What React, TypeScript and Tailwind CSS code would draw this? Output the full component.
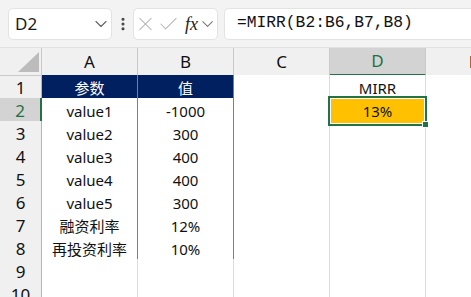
import React from "react";
import { X, Check, ChevronDown, EllipsisVertical } from "lucide-react";

const columns = ["A", "B", "C", "D", "E"];

const tableData: [string, string][] = [
  ["参数", "值"],
  ["value1", "-1000"],
  ["value2", "300"],
  ["value3", "400"],
  ["value4", "400"],
  ["value5", "300"],
  ["融资利率", "12%"],
  ["再投资利率", "10%"],
];

const Toolbar: React.FC = () => (
  <div className="h-[47px] bg-[#f3f3f3] flex items-center pl-2">
    {/* Name box */}
    <div className="w-[104px] h-[32px] bg-white rounded-[5px] border border-[#e3e3e3] flex items-center justify-between pl-[6px] pr-0">
      <span className="text-[17px] text-[#1a1a1a]">D2</span>
      <ChevronDown size={20} strokeWidth={1.4} className="text-[#666]" />
    </div>
    <div className="w-[21px] flex justify-center">
      <EllipsisVertical size={16} strokeWidth={2.6} className="text-[#444]" />
    </div>
    {/* Cancel / enter / fx */}
    <div className="w-[85px] h-[32px] bg-white rounded-[5px] border border-[#e3e3e3] flex items-center pl-0">
      <X size={24} strokeWidth={1.1} className="text-[#b8b8b8]" />
      <Check size={24} strokeWidth={1.1} className="text-[#b8b8b8]" />
      <span className="ml-[5px] text-[18px] italic text-[#222] font-['Liberation_Serif',serif] leading-none">
        fx
      </span>
      <ChevronDown size={20} strokeWidth={1.3} className="text-[#777]" />
    </div>
    {/* Formula bar */}
    <div className="ml-[6px] flex-1 h-[32px] bg-white rounded-l-[5px] border border-r-0 border-[#e3e3e3] flex items-center pl-[12px]">
      <span className="font-['Liberation_Mono',monospace] text-[16.3px] text-[#111]">
        =MIRR(B2:B6,B7,B8)
      </span>
    </div>
  </div>
);

const ColumnHeader: React.FC = () => (
  <div className="grid grid-cols-[42px_96px_96px_96px_96px_96px] h-[28px] border-t border-[#e2e2e2]">
    <div className="bg-[#f0f0f0] border-r border-b border-[#c9c9c9] relative">
      <svg className="absolute right-[2px] bottom-[3px]" width="21" height="20" viewBox="0 0 21 20">
        <polygon points="21,0 21,20 0,20" fill="#bcbcbc" />
      </svg>
    </div>
    {columns.map((c) =>
      c === "D" ? (
        <div
          key={c}
          className="bg-[#d3d3d3] border-r border-[#c9c9c9] border-b-[2px] border-b-[#217346] flex items-center justify-center text-[17px] text-[#1e7145]"
        >
          {c}
        </div>
      ) : (
        <div
          key={c}
          className="bg-[#f0f0f0] border-r border-b border-[#c9c9c9] flex items-center justify-center text-[17px] text-[#111]"
        >
          {c}
        </div>
      )
    )}
  </div>
);

const RowHeader: React.FC<{ n: number }> = ({ n }) =>
  n === 2 ? (
    <div className="bg-[#d3d3d3] border-b border-[#c9c9c9] border-r-[2px] border-r-[#217346] flex items-center justify-center text-[17px] text-[#1e7145]">
      {n}
    </div>
  ) : (
    <div className="bg-[#f0f0f0] border-r border-b border-[#b5b5b5] flex items-center justify-center text-[17px] text-[#111]">
      {n}
    </div>
  );

const SheetRow: React.FC<{ n: number }> = ({ n }) => {
  const data = tableData[n - 1];
  const isHead = n === 1;
  const tableCell = isHead
    ? "bg-[#002060] text-white border-r border-b border-[#7f7f7f]"
    : "bg-white text-[#111] border-r border-b border-[#7f7f7f]";
  const plainCell = "bg-white border-r border-b border-[#dcdcdc]";

  return (
    <div className="grid grid-cols-[42px_96px_96px_96px_96px_96px] h-[23px]">
      <RowHeader n={n} />
      {data ? (
        <>
          <div className={`${tableCell} flex items-center justify-center`}>{data[0]}</div>
          <div className={`${tableCell} flex items-center justify-center`}>{data[1]}</div>
        </>
      ) : (
        <>
          <div className={plainCell} />
          <div className={plainCell} />
        </>
      )}
      <div className={plainCell} />
      {n === 1 ? (
        <div className={`${plainCell} flex items-center justify-center text-[#111]`}>MIRR</div>
      ) : n === 2 ? (
        <div className="bg-[#ffc000] border-r border-b border-[#dcdcdc] relative flex items-center justify-center text-[#111]">
          13%
          {/* selection frame + fill handle */}
          <div className="absolute left-[-2px] top-[-2px] right-[-2px] bottom-[-2px] border-2 border-[#217346] pointer-events-none">
            <div className="absolute inset-0 border border-white" />
          </div>
          <div className="absolute right-[-4px] bottom-[-4px] w-[7px] h-[7px] bg-[#217346] border border-white" />
        </div>
      ) : (
        <div className={plainCell} />
      )}
      <div className={plainCell} />
    </div>
  );
};

export default function App() {
  return (
    <div className="w-[471px] h-[297px] overflow-hidden bg-white font-['Noto_Sans','Noto_Sans_CJK_SC',sans-serif] text-[15px]">
      <Toolbar />
      <ColumnHeader />
      {Array.from({ length: 10 }).map((_, i) => (
        <SheetRow key={i} n={i + 1} />
      ))}
    </div>
  );
}
